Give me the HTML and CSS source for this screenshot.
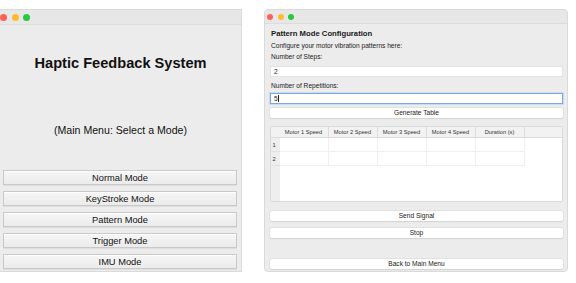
FILE: index.html
```html
<!DOCTYPE html>
<html lang="en">
<head>
    <meta charset="UTF-8">
    <title>Haptic Feedback System</title>
    <link rel="stylesheet" href="styles.css">
</head>
<body>
    <div class="win win-main">
        <div class="titlebar">
            <span class="dot red"></span><span class="dot yellow"></span><span class="dot green"></span>
        </div>
        <div class="main-body">
            <h1 class="main-title">Haptic Feedback System</h1>
            <p class="main-sub">(Main Menu: Select a Mode)</p>
            <div class="mode-list">
                <button class="mode-btn">Normal Mode</button>
                <button class="mode-btn">KeyStroke Mode</button>
                <button class="mode-btn">Pattern Mode</button>
                <button class="mode-btn">Trigger Mode</button>
                <button class="mode-btn">IMU Mode</button>
            </div>
        </div>
    </div>

    <div class="win win-pattern">
        <div class="titlebar">
            <span class="dot red"></span><span class="dot yellow"></span><span class="dot green"></span>
        </div>
        <div class="pattern-body">
            <div class="p-title">Pattern Mode Configuration</div>
            <div class="p-label p-desc">Configure your motor vibration patterns here:</div>
            <div class="p-label p-steps">Number of Steps:</div>
            <div class="p-input">2</div>
            <div class="p-label p-reps">Number of Repetitions:</div>
            <div class="p-input focused">5<span class="caret"></span></div>
            <button class="p-btn gen">Generate Table</button>
            <div class="grid-table">
                <div class="corner"></div>
                <div class="th">Motor 1 Speed</div>
                <div class="th">Motor 2 Speed</div>
                <div class="th">Motor 3 Speed</div>
                <div class="th">Motor 4 Speed</div>
                <div class="th">Duration (s)</div>
                <div class="th-fill"></div>
                <div class="rh">1</div>
                <div class="td"></div><div class="td"></div><div class="td"></div><div class="td"></div><div class="td"></div>
                <div class="td-fill"></div>
                <div class="rh">2</div>
                <div class="td"></div><div class="td"></div><div class="td"></div><div class="td"></div><div class="td"></div>
                <div class="td-fill"></div>
                <div class="rh rh-rest"></div>
                <div class="rest"></div>
            </div>
            <button class="p-btn send">Send Signal</button>
            <button class="p-btn stop">Stop</button>
            <button class="p-btn back">Back to Main Menu</button>
        </div>
    </div>
</body>
</html>
```

FILE: styles.css
```css
* {
    padding: 0;
    margin: 0;
    box-sizing: border-box;
}

body {
    background: #fff;
    display: flex;
    align-items: flex-start;
    font-family: "Liberation Sans", Arial, sans-serif;
    color: #1a1a1a;
}

.win {
    background: #ececec;
    display: flex;
    flex-direction: column;
    border: 1px solid #dadada;
}

.titlebar {
    display: flex;
    align-items: center;
    background: #e7e7e7;
    border-bottom: 1px solid #dcdcdc;
}

.dot {
    border-radius: 50%;
}

.red {
    background: #fe5f57;
}

.yellow {
    background: #febc2e;
}

.green {
    background: #28c840;
}

/* main menu window */
.win-main {
    width: 242px;
    height: 263px;
    margin-top: 9px;
    border-left: none;
}

.win-main .titlebar {
    height: 15px;
    gap: 4.7px;
}

.win-main .dot {
    width: 7px;
    height: 7px;
}

.main-body {
    flex: 1;
    display: flex;
    flex-direction: column;
    align-items: center;
}

.main-title {
    font-size: 14.6px;
    line-height: 18px;
    font-weight: bold;
    margin-top: 29px;
    color: #111;
}

.main-sub {
    font-size: 10.6px;
    line-height: 13px;
    margin-top: 52px;
    color: #111;
}

.mode-list {
    align-self: stretch;
    display: flex;
    flex-direction: column;
    gap: 6px;
    margin: 33px 4px 0 3px;
}

.mode-btn {
    height: 15px;
    font-family: "Liberation Sans", Arial, sans-serif;
    font-size: 9.3px;
    color: #111;
    background: linear-gradient(to bottom, #f6f6f6, #ebebeb);
    border: 1px solid #c9c9c9;
    box-shadow: inset 0 1px 0 #fff, 0 1px 0 #dedede;
}

/* pattern window */
.win-pattern {
    width: 304px;
    height: 263px;
    margin-top: 9px;
    margin-left: 22px;
    border-radius: 4px;
}

.win-pattern .titlebar {
    height: 14px;
    padding-left: 2px;
    gap: 4.5px;
    border-radius: 4px 4px 0 0;
}

.win-pattern .dot {
    width: 6px;
    height: 6px;
}

.pattern-body {
    flex: 1;
    display: flex;
    flex-direction: column;
    padding: 0 4px 0 5px;
}

.p-title {
    font-size: 7.7px;
    font-weight: bold;
    line-height: 10px;
    margin-top: 5px;
    padding-left: 1px;
}

.p-label {
    font-size: 6.6px;
    line-height: 10px;
    padding-left: 1px;
    color: #222;
}

.p-desc {
    margin-top: 2px;
}

.p-steps {
    margin-top: 1px;
}

.p-reps {
    margin-top: 4px;
}

.p-input {
    height: 11px;
    margin-top: 4px;
    background: #fff;
    border: 1px solid #e2e2e2;
    font-size: 6.6px;
    line-height: 9px;
    padding-left: 3px;
    display: flex;
    align-items: center;
}

.p-input.focused {
    margin-top: 2px;
    border: 1px solid #7aa7e6;
    box-shadow: 0 0 0 0.5px #a9c7f0;
}

.caret {
    width: 1px;
    height: 7px;
    background: #222;
    margin-left: 0.5px;
}

.p-btn {
    height: 10px;
    font-family: "Liberation Sans", Arial, sans-serif;
    font-size: 6.6px;
    line-height: 8px;
    color: #1a1a1a;
    background: #fff;
    border: none;
    border-radius: 2px;
    box-shadow: 0 0 0 0.5px #d6d6d6, 0 1px 1px #d2d2d2;
}

.gen {
    margin-top: 4px;
}

.grid-table {
    height: 76px;
    margin-top: 8px;
    display: grid;
    grid-template-columns: 8.5px repeat(5, 49px) 1fr;
    grid-template-rows: 11px 14px 14px 1fr;
    background: #fff;
    border: 1px solid #dadada;
    border-radius: 2px;
    overflow: hidden;
    font-size: 5.7px;
    color: #333;
}

.corner,
.th,
.th-fill {
    background: #f2f2f2;
    border-bottom: 1px solid #dcdcdc;
}

.th {
    border-right: 1px solid #dcdcdc;
    display: flex;
    align-items: center;
    justify-content: center;
}

.rh {
    background: #eeeeee;
    border-bottom: 1px solid #e2e2e2;
    display: flex;
    align-items: center;
    padding-left: 1.5px;
}

.rh-rest {
    border-bottom: none;
}

.td {
    border-right: 1px solid #efefef;
    border-bottom: 1px solid #efefef;
}

.rest {
    grid-column: 2 / -1;
}

.send {
    margin-top: 9px;
}

.stop {
    margin-top: 7px;
}

.back {
    margin-top: 21px;
}
```
